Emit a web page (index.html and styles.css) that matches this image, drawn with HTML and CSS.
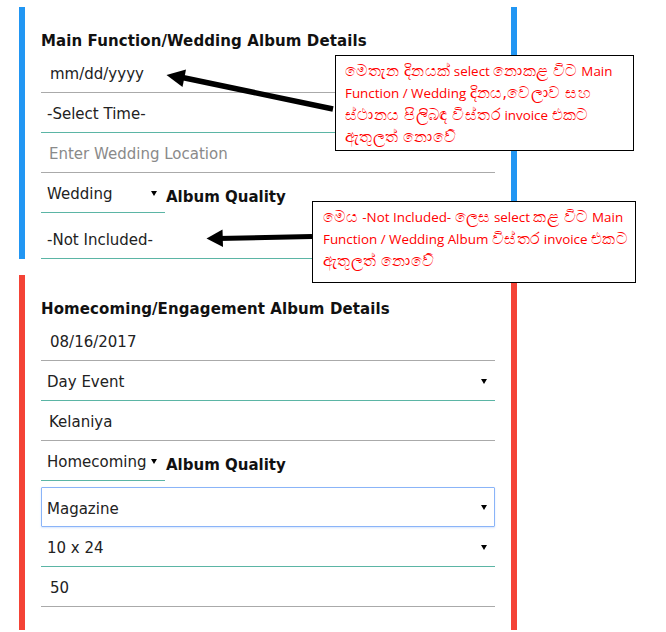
FILE: index.html
```html
<!DOCTYPE html>
<html>
<head>
<meta charset="utf-8">
<link rel="stylesheet" href="styles.css">
</head>
<body>
<div class="page">
  <section class="card card-blue">
    <h3 class="card-title">Main Function/Wedding Album Details</h3>
    <div class="field field-input field-date">mm/dd/yyyy</div>
    <div class="field field-select"><span>-Select Time-</span><i class="caret hidden"></i></div>
    <div class="field field-input field-placeholder">Enter Wedding Location</div>
    <div class="quality-row">
      <div class="field field-select field-small"><span>Wedding</span><i class="caret"></i></div>
      <span class="quality-label">Album Quality</span>
    </div>
    <div class="field field-select"><span>-Not Included-</span><i class="caret hidden"></i></div>
  </section>

  <section class="card card-red">
    <h3 class="card-title">Homecoming/Engagement Album Details</h3>
    <div class="field field-input field-date">08/16/2017</div>
    <div class="field field-select"><span>Day Event</span><i class="caret"></i></div>
    <div class="field field-input">Kelaniya</div>
    <div class="quality-row">
      <div class="field field-select field-small"><span>Homecoming</span><i class="caret"></i></div>
      <span class="quality-label">Album Quality</span>
    </div>
    <div class="field field-select field-focus"><span>Magazine</span><i class="caret"></i></div>
    <div class="field field-select"><span>10 x 24</span><i class="caret"></i></div>
    <div class="field field-input field-date">50</div>
  </section>

  <svg class="arrows" width="666" height="632" viewBox="0 0 666 632">
    <line x1="333" y1="109" x2="180" y2="77" stroke="#000" stroke-width="5.5"/>
    <polygon points="166.5,75 186,69.5 182.5,87" fill="#000"/>
    <line x1="312" y1="236.5" x2="218" y2="238.5" stroke="#000" stroke-width="5"/>
    <polygon points="206.5,238.5 222.5,229.5 223,247" fill="#000"/>
  </svg>

  <div class="note note-one"><span class="si">මෙතැන දිනයක්</span> select <span class="si">නොකළ විට</span> Main<br>Function / Wedding <span class="si">දිනය,වෙලාව සහ</span><br><span class="si">ස්ථානය පිලිබඳ විස්තර</span> invoice <span class="si">එකට</span><br><span class="si">ඇතුලත් නොවේ</span></div>
  <div class="note note-two"><span class="si">මෙය</span> -Not Included- <span class="si">ලෙස</span> select <span class="si">කළ විට</span> Main<br>Function / Wedding Album <span class="si">විස්තර</span> invoice <span class="si">එකට</span><br><span class="si">ඇතුලත් නොවේ</span></div>
</div>
</body>
</html>
```

FILE: styles.css
```css
html, body {
  margin: 0;
  padding: 0;
  background: #fff;
}

.page {
  position: relative;
  width: 666px;
  height: 632px;
  overflow: hidden;
  padding-top: 7px;
  box-sizing: border-box;
  font-family: "DejaVu Sans", Verdana, sans-serif;
  color: #222;
}

.card {
  width: 454px;
  margin-left: 19px;
  padding: 24px 16px 0;
  border-left: 6px solid;
  border-right: 6px solid;
}

.card-blue {
  border-color: #2196f3;
}

.card-red {
  border-color: #f44336;
  margin-top: 16px;
  padding-bottom: 23px;
}

.card-title {
  margin: 0 0 2px;
  font-size: 15px;
  line-height: 20px;
  font-weight: bold;
  letter-spacing: 0.1px;
  color: #111;
}

.field {
  height: 35px;
  padding-top: 4px;
  border-bottom: 1px solid #aaa;
  font-size: 15px;
  line-height: 35px;
  box-sizing: content-box;
  white-space: nowrap;
}

.field-input {
  padding-left: 8px;
}

.field-date {
  padding-left: 9px;
}

.field-placeholder {
  color: #8a8a8a;
}

.field-select {
  display: flex;
  justify-content: space-between;
  align-items: center;
  padding-left: 6px;
  padding-right: 8px;
  border-bottom-color: #5bb5a5;
}

.field-small {
  width: 110px;
  flex: none;
}

.field-focus {
  height: 34px;
  border: 1px solid #8ab4f8;
  border-radius: 1px;
  padding-left: 5px;
  padding-right: 7px;
  box-shadow: 0 1px 2px rgba(138, 180, 248, 0.35);
}

.caret {
  width: 0;
  height: 0;
  border-left: 3px solid transparent;
  border-right: 3px solid transparent;
  border-top: 5px solid #000;
  margin-top: -3px;
}

.caret.hidden {
  visibility: hidden;
}

.quality-row {
  display: flex;
  align-items: flex-start;
  height: 46px;
}

.quality-label {
  margin-left: 1px;
  margin-top: 14px;
  font-size: 15px;
  font-weight: bold;
  line-height: 20px;
  color: #111;
}

.arrows {
  position: absolute;
  left: 0;
  top: 0;
  pointer-events: none;
}

.note {
  position: absolute;
  background: #fff;
  border: 1px solid #000;
  color: #f00;
  font-family: "Open Sans", "Noto Sans", sans-serif;
  font-size: 13.4px;
  line-height: 21px;
  white-space: nowrap;
  box-sizing: border-box;
}

.note .si {
  font-size: 16px;
  letter-spacing: 0.4px;
}

.note-one {
  left: 335px;
  top: 55px;
  width: 299px;
  height: 96px;
  padding: 4px 9px;
}

.note-two {
  left: 312px;
  top: 201px;
  width: 324px;
  height: 82px;
  padding: 4px 10px;
}
```
